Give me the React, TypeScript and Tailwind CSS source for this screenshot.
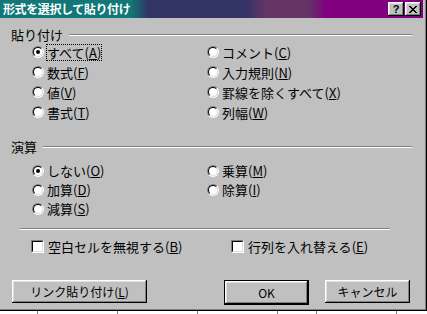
import type { ReactNode } from "react";

const raised =
  "shadow-[inset_-1px_-1px_#000,inset_1px_1px_#fff,inset_-2px_-2px_#808080,inset_2px_2px_#dfdfdf]";

function Radio({ checked }: { checked?: boolean }) {
  return (
    <span className="flex h-[12px] w-[12px] shrink-0 rounded-full border border-t-[#808080] border-l-[#808080] border-r-white border-b-white">
      <span className="flex flex-1 items-center justify-center rounded-full border border-t-black border-l-black border-r-[#dfdfdf] border-b-[#dfdfdf] bg-white">
        {checked && <span className="h-[4px] w-[4px] rounded-full bg-black" />}
      </span>
    </span>
  );
}

function Check() {
  return (
    <span className="flex h-[13px] w-[13px] shrink-0 border border-t-[#808080] border-l-[#808080] border-r-white border-b-white">
      <span className="flex-1 border border-t-black border-l-black border-r-[#dfdfdf] border-b-[#dfdfdf] bg-white" />
    </span>
  );
}

// label like すべて(A) with the accelerator underlined
function Label({ text, k }: { text: string; k: string }) {
  return (
    <>
      {text}(<span className="underline underline-offset-[1px]">{k}</span>)
    </>
  );
}

type Opt = [string, string];

function RadioRow({ opt, checked, focus, h }: { opt: Opt; checked?: boolean; focus?: boolean; h: string }) {
  return (
    <div className={`flex items-center ${h}`}>
      <Radio checked={checked} />
      <span
        className={`ml-[2px] border text-[13px] leading-[15px] ${focus ? "border-dotted border-black" : "border-transparent"}`}
      >
        <Label text={opt[0]} k={opt[1]} />
      </span>
    </div>
  );
}

function GroupHeader({ children, className }: { children: ReactNode; className: string }) {
  return (
    <div className={`flex h-[14px] items-center pl-[11px] pr-[11px] ${className}`}>
      <span className="text-[13px] leading-[14px]">{children}</span>
      <div className="ml-[6px] h-[2px] flex-1 border-t border-b border-t-[#808080] border-b-white" />
    </div>
  );
}

function Button({ children, className }: { children: ReactNode; className: string }) {
  return (
    <div className={`flex h-[23px] items-center justify-center bg-[#c0c0c0] ${raised} ${className}`}>
      {children}
    </div>
  );
}

const paste1L: Opt[] = [["すべて", "A"], ["数式", "F"], ["値", "V"], ["書式", "T"]];
const paste1R: Opt[] = [["コメント", "C"], ["入力規則", "N"], ["罫線を除くすべて", "X"], ["列幅", "W"]];
const opL: Opt[] = [["しない", "O"], ["加算", "D"], ["減算", "S"]];
const opR: Opt[] = [["乗算", "M"], ["除算", "I"]];

export default function App() {
  return (
    <div className="h-[314px] w-[427px] overflow-hidden bg-white font-['Noto_Sans_CJK_JP','Noto_Sans_CJK_SC',sans-serif] text-[12px] text-black">
      <div className="flex h-[311px] flex-col bg-[#c0c0c0] pr-[4px] shadow-[inset_-1px_-1px_#000,inset_-2px_-2px_#808080]">
        {/* title bar */}
        <div className="flex h-[18px] shrink-0 items-center bg-[image:linear-gradient(90deg,#117777_0%,#117777_31%,#323466_35%,#323466_58%,#653465_63%,#653465_73%,#800080_77%,#800080_100%)] pl-[3px] pr-[2px]">
          <span className="flex-1 text-[12px] font-bold leading-[18px] tracking-[-0.4px] text-white">
            形式を選択して貼り付け
          </span>
          <div className="flex gap-[1px]">
            <div className={`flex h-[14px] w-[16px] items-center justify-center bg-[#c0c0c0] ${raised}`}>
              <span className="font-['Liberation_Sans',sans-serif] text-[11px] font-bold leading-[11px]">?</span>
            </div>
            <div className={`flex h-[14px] w-[16px] items-center justify-center bg-[#c0c0c0] ${raised}`}>
              <svg width="8" height="7" viewBox="0 0 8 7" shapeRendering="crispEdges">
                <path d="M0 0h2v1h-2zM6 0h2v1h-2zM1 1h2v1h-2zM5 1h2v1h-2zM2 2h4v1h-4zM3 3h2v1h-2zM2 4h4v1h-4zM1 5h2v1h-2zM5 5h2v1h-2zM0 6h2v1h-2zM6 6h2v1h-2z" fill="#000" />
              </svg>
            </div>
          </div>
        </div>

        {/* 貼り付け group */}
        <GroupHeader className="mt-[10px]">貼り付け</GroupHeader>
        <div className="flex pl-[32px]">
          <div className="flex w-[175px] flex-col">
            {paste1L.map((o, i) => (
              <RadioRow key={o[1]} opt={o} checked={i === 0} focus={i === 0} h="h-[20px]" />
            ))}
          </div>
          <div className="flex flex-col">
            {paste1R.map((o) => (
              <RadioRow key={o[1]} opt={o} h="h-[20px]" />
            ))}
          </div>
        </div>

        {/* 演算 group */}
        <GroupHeader className="mt-[18px]">演算</GroupHeader>
        <div className="mt-[7px] flex pl-[32px]">
          <div className="flex w-[175px] flex-col">
            {opL.map((o, i) => (
              <RadioRow key={o[1]} opt={o} checked={i === 0} h="h-[19px]" />
            ))}
          </div>
          <div className="flex flex-col">
            {opR.map((o) => (
              <RadioRow key={o[1]} opt={o} h="h-[19px]" />
            ))}
          </div>
        </div>

        <div className="ml-[20px] mt-[10px] h-[2px] w-[370px] border-t border-b border-t-[#808080] border-b-white" />

        {/* checkboxes */}
        <div className="mt-[10px] flex h-[13px] items-center pl-[31px] text-[13px]">
          <div className="flex w-[200px] items-center gap-[4px]">
            <Check />
            <span className="leading-[13px]">
              <Label text="空白セルを無視する" k="B" />
            </span>
          </div>
          <div className="flex items-center gap-[4px]">
            <Check />
            <span className="leading-[13px]">
              <Label text="行列を入れ替える" k="E" />
            </span>
          </div>
        </div>

        {/* buttons */}
        <div className="mt-[27px] flex pl-[12px]">
          <Button className="w-[135px]">
            <span>
              リンク貼り付け(<span className="underline underline-offset-[1px]">L</span>)
            </span>
          </Button>
          <div className="ml-[77px] border border-black">
            <Button className="w-[83px]">OK</Button>
          </div>
          <Button className="ml-[16px] w-[85px]">キャンセル</Button>
        </div>
      </div>

      {/* worksheet grid peeking below */}
      <div className="flex h-[3px]">
        <div className="w-[38px] border-r border-[#808080]" />
        <div className="w-[80px] border-r border-[#808080]" />
        <div className="w-[80px] border-r border-[#808080]" />
        <div className="w-[80px] border-r border-[#808080]" />
        <div className="w-[39px] border-r border-[#808080]" />
        <div className="w-[80px] border-r border-[#808080]" />
      </div>
    </div>
  );
}
